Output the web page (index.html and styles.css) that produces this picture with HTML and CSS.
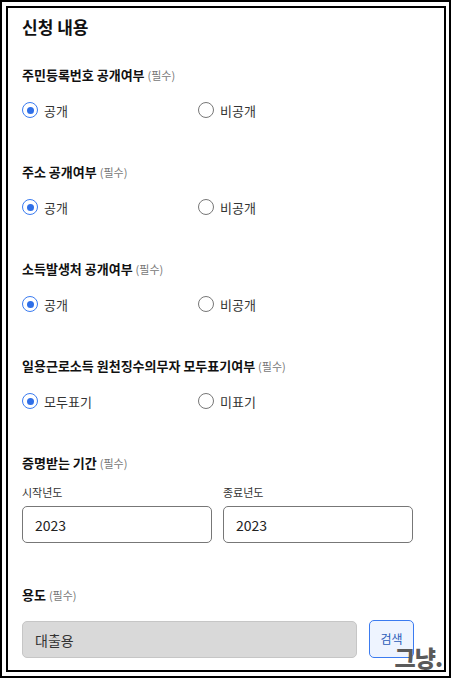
FILE: index.html
```html
<!DOCTYPE html>
<html>
<head>
  <title>신청 내용</title>
  <link rel="stylesheet" href="styles.css">
</head>
<body>
  <div class="frame">
    <div class="panel">
      <h2 class="title">신청 내용</h2>

      <div class="field">
        <div class="label">주민등록번호 공개여부 <span class="req">(필수)</span></div>
        <div class="options">
          <label class="opt"><span class="radio on"></span>공개</label>
          <label class="opt"><span class="radio"></span>비공개</label>
        </div>
      </div>

      <div class="field">
        <div class="label">주소 공개여부 <span class="req">(필수)</span></div>
        <div class="options">
          <label class="opt"><span class="radio on"></span>공개</label>
          <label class="opt"><span class="radio"></span>비공개</label>
        </div>
      </div>

      <div class="field">
        <div class="label">소득발생처 공개여부 <span class="req">(필수)</span></div>
        <div class="options">
          <label class="opt"><span class="radio on"></span>공개</label>
          <label class="opt"><span class="radio"></span>비공개</label>
        </div>
      </div>

      <div class="field">
        <div class="label">일용근로소득 원천징수의무자 모두표기여부 <span class="req">(필수)</span></div>
        <div class="options">
          <label class="opt"><span class="radio on"></span>모두표기</label>
          <label class="opt"><span class="radio"></span>미표기</label>
        </div>
      </div>

      <div class="field">
        <div class="label">증명받는 기간 <span class="req">(필수)</span></div>
        <div class="years">
          <div class="year">
            <div class="sublabel">시작년도</div>
            <div class="box">2023</div>
          </div>
          <div class="year">
            <div class="sublabel">종료년도</div>
            <div class="box">2023</div>
          </div>
        </div>
      </div>

      <div class="field last">
        <div class="label">용도 <span class="req">(필수)</span></div>
        <div class="purpose">
          <div class="box disabled">대출용</div>
          <button class="search">검색</button>
        </div>
      </div>
    </div>
    <div class="mark">그냥.</div>
  </div>
</body>
</html>
```

FILE: styles.css
```css
/* page frame */
body {
  margin: 0;
  font-family: "Noto Sans CJK KR", "Noto Sans", sans-serif;
  color: #222;
  background: #fff;
}

.frame {
  position: relative;
  width: 451px;
  height: 678px;
  box-sizing: border-box;
  border: 2px solid #000;
  padding: 4px 3px 0 4px;
  overflow: hidden;
}

.panel {
  height: 666px;
  box-sizing: border-box;
  border: 2px solid #000;
  padding: 7px 30px 0 14px;
}

.title {
  margin: 0;
  font-size: 17px;
  line-height: 24px;
  font-weight: 700;
  color: #111;
}

/* form fields */
.field {
  margin-top: 43px;
}

.field:first-of-type {
  margin-top: 27px;
}

.label {
  font-size: 13px;
  line-height: 18px;
  font-weight: 700;
  color: #111;
}

.req {
  font-size: 11px;
  font-weight: 400;
  color: #777;
}

.options {
  display: grid;
  grid-template-columns: 176px 1fr;
  margin-top: 16px;
}

.opt {
  display: flex;
  align-items: center;
  gap: 6px;
  height: 20px;
  font-size: 13px;
  color: #333;
}

.radio {
  width: 16px;
  height: 16px;
  box-sizing: border-box;
  border: 1.5px solid #777;
  border-radius: 50%;
  display: flex;
  align-items: center;
  justify-content: center;
}

.radio.on {
  border-color: #3a7bf0;
}

.radio.on::after {
  content: "";
  width: 7px;
  height: 7px;
  border-radius: 50%;
  background: #2f6fe8;
}

.years {
  display: grid;
  grid-template-columns: 190px 190px;
  gap: 11px;
  margin-top: 13px;
}

.sublabel {
  font-size: 11px;
  line-height: 15px;
  color: #333;
  margin-bottom: 6px;
}

.box {
  height: 37px;
  box-sizing: border-box;
  border: 1px solid #777;
  border-radius: 5px;
  padding: 0 12px;
  display: flex;
  align-items: center;
  font-size: 14px;
  color: #222;
}

.purpose {
  display: flex;
  gap: 12px;
  margin-top: 17px;
}

.box.disabled {
  flex: 1;
  background: #d9d9d9;
  border-color: #c6c6c6;
  color: #333;
}

.search {
  width: 45px;
  height: 38px;
  margin-top: -1px;
  border: 1px solid #3b7bf0;
  border-radius: 5px;
  background: #eef4ff;
  color: #2a5cb8;
  font-family: inherit;
  font-size: 12px;
  line-height: 14px;
  padding: 0;
}

/* watermark over the corner */
.mark {
  position: absolute;
  right: 7px;
  bottom: 10px;
  font-size: 23px;
  font-weight: 900;
  color: #5a5a5a;
  letter-spacing: -1px;
  line-height: 18px;
}
```
